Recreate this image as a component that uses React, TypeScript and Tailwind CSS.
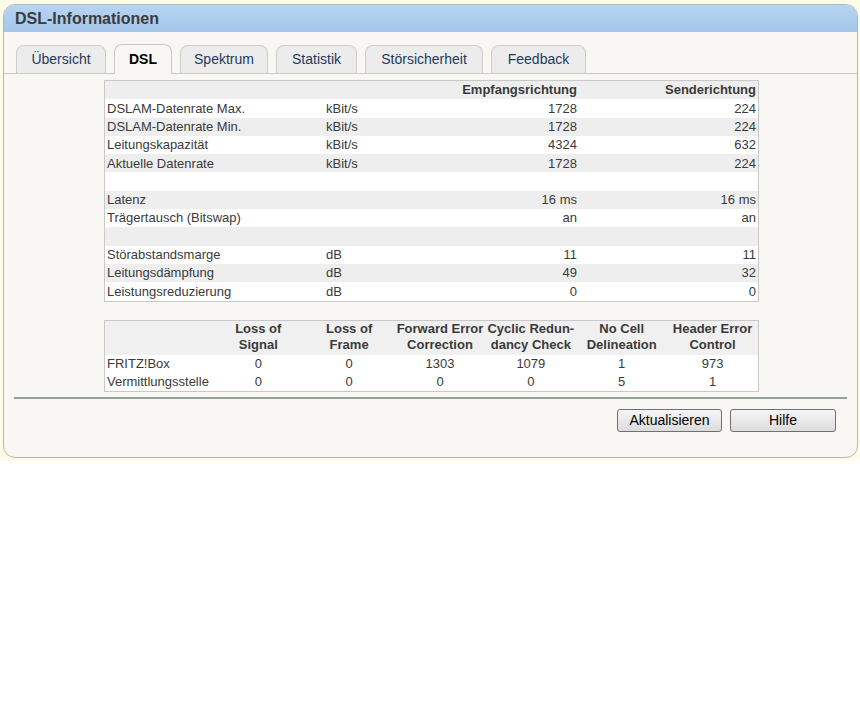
import React from 'react';

const font = { fontFamily: '"Liberation Sans", Arial, sans-serif' };

const tabs = [
  { label: 'Übersicht', w: 'w-[90px]' },
  { label: 'DSL', w: 'w-[58px]', active: true },
  { label: 'Spektrum', w: 'w-[88px]' },
  { label: 'Statistik', w: 'w-[81px]' },
  { label: 'Störsicherheit', w: 'w-[118px]' },
  { label: 'Feedback', w: 'w-[95px]' },
];

type Row = { label: string; unit: string; rx: string; tx: string };

const rows: Row[] = [
  { label: 'DSLAM-Datenrate Max.', unit: 'kBit/s', rx: '1728', tx: '224' },
  { label: 'DSLAM-Datenrate Min.', unit: 'kBit/s', rx: '1728', tx: '224' },
  { label: 'Leitungskapazität', unit: 'kBit/s', rx: '4324', tx: '632' },
  { label: 'Aktuelle Datenrate', unit: 'kBit/s', rx: '1728', tx: '224' },
  { label: '', unit: '', rx: '', tx: '' },
  { label: 'Latenz', unit: '', rx: '16 ms', tx: '16 ms' },
  { label: 'Trägertausch (Bitswap)', unit: '', rx: 'an', tx: 'an' },
  { label: '', unit: '', rx: '', tx: '' },
  { label: 'Störabstandsmarge', unit: 'dB', rx: '11', tx: '11' },
  { label: 'Leitungsdämpfung', unit: 'dB', rx: '49', tx: '32' },
  { label: 'Leistungsreduzierung', unit: 'dB', rx: '0', tx: '0' },
];

const errHeads = [
  ['Loss of', 'Signal'],
  ['Loss of', 'Frame'],
  ['Forward Error', 'Correction'],
  ['Cyclic Redun-', 'dancy Check'],
  ['No Cell', 'Delineation'],
  ['Header Error', 'Control'],
];

const errRows = [
  { label: 'FRITZ!Box', vals: ['0', '0', '1303', '1079', '1', '973'] },
  { label: 'Vermittlungsstelle', vals: ['0', '0', '0', '0', '5', '1'] },
];

function LineRow({ r, gray }: { r: Row; gray: boolean }) {
  return (
    <div className={`flex h-[18.3px] items-center ${gray ? 'bg-[#eeeeee]' : 'bg-white'}`}>
      <div className="w-[221px] pl-[2px]">{r.label}</div>
      <div className="w-[100px]">{r.unit}</div>
      <div className="w-[151px] text-right">{r.rx}</div>
      <div className="flex-1 pr-[2px] text-right">{r.tx}</div>
    </div>
  );
}

export default function App() {
  return (
    <div className="min-h-screen bg-white text-[13px] text-[#3a3a3a]" style={font}>
      <div className="h-[461px] bg-[#fcfce9] px-[3px] pt-[4px]">
        <div className="flex h-[454px] w-[855px] flex-col overflow-hidden rounded-[12px] border border-[#b4b9ad] bg-[#f8f7f3]">
          {/* header */}
          <div className="flex h-[27px] items-center bg-gradient-to-b from-[#b6d4f3] to-[#a5c7eb] pl-[11px] text-[16px] font-bold text-[#3b3b3b]">
            DSL-Informationen
          </div>

          {/* tabs */}
          <div className="flex h-[42px] items-end gap-[8px] border-b border-[#c9c9c9] pl-[12px]">
            {tabs.map((t) =>
              t.active ? (
                <div
                  key={t.label}
                  className={`${t.w} -mb-px flex h-[30px] items-center justify-center rounded-t-[8px] border border-b-0 border-[#c9c9c9] bg-[#f8f7f3] text-[14px] font-bold text-black`}
                >
                  {t.label}
                </div>
              ) : (
                <div
                  key={t.label}
                  className={`${t.w} flex h-[28px] items-center justify-center rounded-t-[8px] border border-b-0 border-[#cfcfcf] bg-[#ececec] text-[14px] text-[#1f3a5c]`}
                >
                  {t.label}
                </div>
              ),
            )}
          </div>

          {/* content */}
          <div className="pl-[100px] pt-[6px]">
            <div className="w-[655px] border border-[#c8c8c8] bg-white">
              <div className="flex h-[18.3px] items-center bg-[#eeeeee] font-bold">
                <div className="w-[221px]" />
                <div className="w-[100px]" />
                <div className="w-[151px] text-right">Empfangsrichtung</div>
                <div className="flex-1 pr-[2px] text-right">Senderichtung</div>
              </div>
              {rows.map((r, i) => (
                <LineRow key={i} r={r} gray={i % 2 === 1} />
              ))}
            </div>

            <div className="mt-[18px] w-[655px] border border-[#c8c8c8] bg-white">
              <div className="flex h-[34px] items-center bg-[#f0f0f0] pb-[1px] font-bold leading-[16px]">
                <div className="w-[108px]" />
                {errHeads.map((h) => (
                  <div key={h[0]} className="w-[91px] text-center">
                    <div>{h[0]}</div>
                    <div>{h[1]}</div>
                  </div>
                ))}
              </div>
              {errRows.map((r) => (
                <div key={r.label} className="flex h-[18px] items-center">
                  <div className="w-[108px] pl-[2px]">{r.label}</div>
                  {r.vals.map((v, i) => (
                    <div key={i} className="w-[91px] text-center">
                      {v}
                    </div>
                  ))}
                </div>
              ))}
            </div>
          </div>

          {/* separator */}
          <div className="mx-[10px] mt-[5px] h-[2px] bg-[#91a29d]" />

          {/* buttons */}
          <div className="flex justify-end gap-[8px] pr-[21px] pt-[10px]">
            <button className="h-[23px] w-[105px] rounded-[3px] border border-[#707070] bg-gradient-to-b from-[#f6f6f6] to-[#dcdcdc] text-[14px] text-black">
              Aktualisieren
            </button>
            <button className="h-[23px] w-[106px] rounded-[3px] border border-[#707070] bg-gradient-to-b from-[#f6f6f6] to-[#dcdcdc] text-[14px] text-black">
              Hilfe
            </button>
          </div>
        </div>
      </div>
    </div>
  );
}
